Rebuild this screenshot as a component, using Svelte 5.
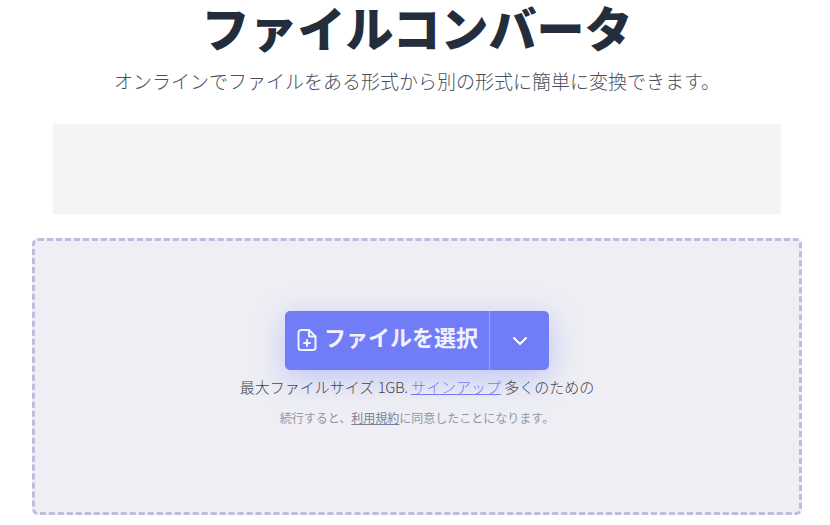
<script>
  let title = 'ファイルコンバータ';
  let subtitle = 'オンラインでファイルをある形式から別の形式に簡単に変換できます。';
</script>

<div class="page">
  <h1>{title}</h1>
  <p class="subtitle">{subtitle}</p>

  <div class="ad"></div>

  <div class="dropzone">
    <div class="button">
      <div class="select">
        <svg width="20" height="24" viewBox="0 0 20 24" fill="none" stroke="currentColor" stroke-width="2" stroke-linecap="round" stroke-linejoin="round">
          <path d="M12 2H4a2.500 2.500 0 0 0-2.500 2.500v15A2.500 2.500 0 0 0 4 22h12a2.500 2.500 0 0 0 2.500-2.500V8.500z" />
          <path d="M12 2v6.500h6.500" />
          <path d="M10 12v6M7 15h6" />
        </svg>
        <span>ファイルを選択</span>
      </div>
      <div class="more">
        <svg width="16" height="10" viewBox="0 0 16 10" fill="none" stroke="currentColor" stroke-width="2" stroke-linecap="round" stroke-linejoin="round">
          <path d="M2 2l6 6 6-6" />
        </svg>
      </div>
    </div>
    <p class="limit">最大ファイルサイズ <span class="size">1GB.</span> <a href="#signup">サインアップ</a> 多くのための</p>
    <p class="terms">続行すると、<a href="#terms">利用規約</a>に同意したことになります。</p>
  </div>
</div>

<style>
  :global(body) {
    margin: 0;
    background: #fff;
    font-family: "Noto Sans CJK JP", "Noto Sans", sans-serif;
  }
  .page {
    width: 830px;
    height: 525px;
    overflow: hidden;
    box-sizing: border-box;
    padding: 0 28px 10px 32px;
    display: flex;
    flex-direction: column;
    align-items: center;
  }
  h1 {
    margin: 0;
    font-size: 48px;
    line-height: 52px;
    font-weight: 900;
    color: #242d3c;
    white-space: nowrap;
  }
  .subtitle {
    margin: 0;
    padding-top: 15px;
    font-size: 19px;
    line-height: 27px;
    font-weight: 300;
    color: #4a4f5c;
    white-space: nowrap;
  }
  .ad {
    margin-top: 30px;
    width: 728px;
    height: 90px;
    background: #f4f4f4;
  }
  .dropzone {
    margin-top: 24px;
    width: 770px;
    height: 277px;
    box-sizing: border-box;
    border: 3px dashed #bdbddd;
    border-radius: 6px;
    background: #eeeef4;
    display: flex;
    flex-direction: column;
    align-items: center;
    padding-top: 70px;
  }
  .button {
    display: flex;
    height: 59px;
    border-radius: 5px;
    background: #717df7;
    color: #fff;
    box-shadow: 0 8px 30px rgba(113, 125, 247, 0.38);
  }
  .select {
    display: flex;
    align-items: center;
    gap: 7px;
    padding: 0 11px 6px 12px;
    font-size: 22px;
    font-weight: 700;
    line-height: 28px;
    color: #f1f2fe;
    border-right: 1px solid #9aa3fa;
  }
  .select span {
    margin-top: -4px;
  }
  .select svg {
    margin-top: 4px;
  }
  .more {
    width: 59px;
    display: flex;
    align-items: center;
    justify-content: center;
  }
  .limit {
    margin: 6px 0 0;
    font-size: 15px;
    line-height: 22px;
    font-weight: 300;
    color: #3f4553;
  }
  .limit a {
    color: #717df7;
  }
  .size {
    letter-spacing: -0.4px;
  }
  .terms {
    margin: 11px 0 0;
    font-size: 12px;
    line-height: 18px;
    font-weight: 400;
    color: #9097ab;
  }
  .terms a {
    color: #787f96;
  }
</style>
